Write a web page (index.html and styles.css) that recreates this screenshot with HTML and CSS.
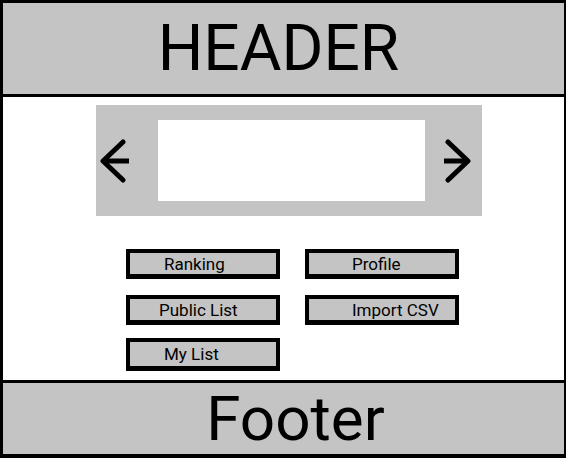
FILE: index.html
```html
<!DOCTYPE html>
<html lang="en">
<head>
    <meta charset="UTF-8">
    <meta name="viewport" content="width=device-width, initial-scale=1.0">
    <title>Home</title>
    <link rel="stylesheet" href="styles.css">
</head>
<body>
    <div class="frame">
        <header class="header">HEADER</header>

        <main class="main">
            <div class="carousel">
                <svg class="arrow arrow-left" width="29" height="44" viewBox="0 0 29 44">
                    <path d="M23 3 L3 22 L23 41" />
                    <path class="bar" d="M3 22 H29" />
                </svg>
                <div class="slide"></div>
                <svg class="arrow arrow-right" width="27" height="44" viewBox="0 0 27 44">
                    <path d="M4 3 L24 22 L4 41" />
                    <path class="bar" d="M0 22 H24" />
                </svg>
            </div>

            <div class="menu">
                <button class="menu-btn">Ranking</button>
                <button class="menu-btn menu-btn-right">Profile</button>
                <button class="menu-btn menu-btn-tight">Public List</button>
                <button class="menu-btn menu-btn-right">Import CSV</button>
                <button class="menu-btn menu-btn-last">My List</button>
            </div>
        </main>

        <footer class="footer">Footer</footer>
    </div>
</body>
</html>
```

FILE: styles.css
```css
html, body {
    margin: 0;
    padding: 0;
    background: white;
}
body {
    font-family: Roboto, "Liberation Sans", sans-serif;
    color: black;
}
.frame {
    width: 566px;
    height: 458px;
    box-sizing: border-box;
    border: 3px solid black;
    border-right-width: 2px;
    border-bottom-width: 4px;
    display: flex;
    flex-direction: column;
}
.header {
    height: 91px;
    background: #c4c4c4;
    border-bottom: 3px solid black;
    font-size: 64px;
    line-height: 91px;
    text-align: center;
    padding-right: 10px;
}
.main {
    flex: 1;
    background: white;
    padding: 8px 0 0 93px;
}
.carousel {
    width: 386px;
    height: 111px;
    box-sizing: border-box;
    background: #c4c4c4;
    padding: 15px 0;
    display: flex;
    align-items: center;
}
.arrow {
    flex: none;
    fill: none;
    stroke: black;
    stroke-width: 5;
    stroke-linecap: round;
    stroke-linejoin: round;
}
.arrow .bar {
    stroke-linecap: butt;
}
.arrow-left {
    margin: 0 29px 0 4px;
}
.arrow-right {
    margin-left: 19px;
}
.slide {
    width: 267px;
    height: 81px;
    background: white;
}
.menu {
    display: grid;
    grid-template-columns: 154px 154px;
    grid-auto-rows: 30px;
    gap: 16px 25px;
    margin: 33px 0 0 30px;
}
.menu-btn {
    box-sizing: border-box;
    border: 4px solid black;
    border-bottom-width: 5px;
    background: #c4c4c4;
    font-family: Roboto, "Liberation Sans", sans-serif;
    font-size: 17px;
    color: black;
    text-align: left;
    padding: 0 0 0 34px;
    margin: 0;
    line-height: 20px;
}
.menu-btn-tight {
    padding-left: 29px;
}
.menu-btn-right {
    padding-left: 43px;
}
.menu-btn-last {
    margin-top: -3px;
}
.footer {
    height: 71px;
    background: #c4c4c4;
    border-top: 3px solid black;
    font-size: 62px;
    line-height: 71px;
    text-align: center;
    padding-left: 24px;
}
```
